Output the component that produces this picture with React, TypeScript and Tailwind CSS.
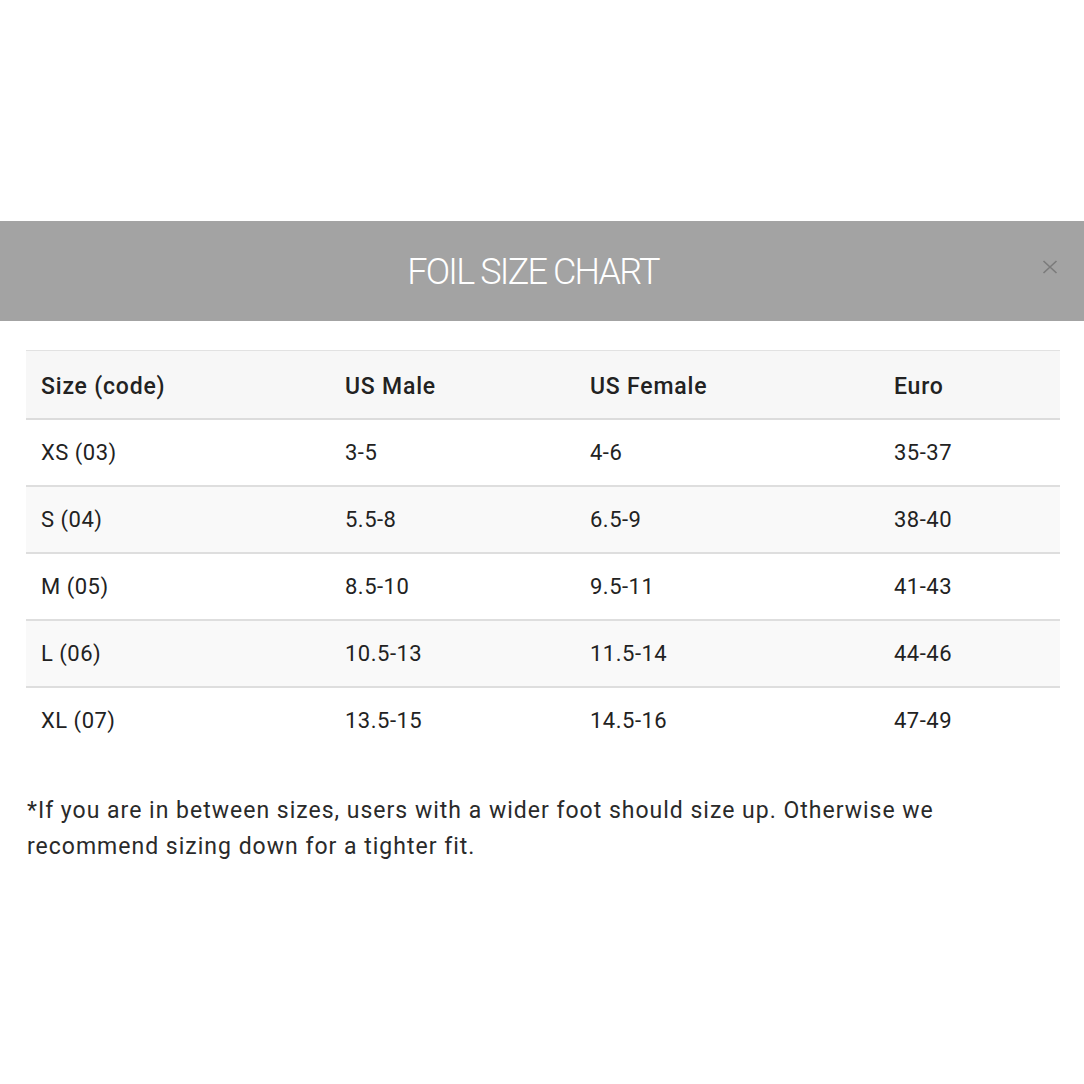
const rows = [
  ["XS (03)", "3-5", "4-6", "35-37"],
  ["S (04)", "5.5-8", "6.5-9", "38-40"],
  ["M (05)", "8.5-10", "9.5-11", "41-43"],
  ["L (06)", "10.5-13", "11.5-14", "44-46"],
  ["XL (07)", "13.5-15", "14.5-16", "47-49"],
];

const cols = ["w-[304px]", "w-[245px]", "w-[304px]", "w-[181px]"];

const App = () => {
  return (
    <main
      className="w-[1084px] h-[1084px] bg-white pt-[221px]"
      style={{ fontFamily: "Roboto, 'Liberation Sans', sans-serif" }}
    >
      <header className="relative h-[100px] bg-[#a3a3a3] flex items-center justify-center pr-[18px]">
        <h1 className="text-[36px] text-white tracking-[-1.8px] font-light mt-[2px]">
          FOIL SIZE CHART
        </h1>
        <button className="absolute right-[26px] top-[39px] text-[#7b7b7b]">
          <svg width="16" height="14" viewBox="0 0 16 14">
            <path d="M1.5 1 L14.5 13 M14.5 1 L1.5 13" stroke="#7b7b7b" strokeWidth="1.6" />
          </svg>
        </button>
      </header>

      <div className="mx-[26px] mt-[29px]">
        <table className="w-[1034px] border-collapse text-[22px] text-[#222] tracking-[0.5px]">
          <thead>
            <tr className="bg-[#f7f7f7] border-t border-[#e2e2e2] border-b-2 border-b-[#dcdcdc] h-[68px]">
              {["Size (code)", "US Male", "US Female", "Euro"].map((h, i) => (
                <th
                  key={h}
                  className={`${cols[i]} text-left font-medium text-[23px] tracking-[0.8px] pl-[15px] pt-[5px]`}
                >
                  {h}
                </th>
              ))}
            </tr>
          </thead>
          <tbody>
            {rows.map((r, ri) => (
              <tr
                key={r[0]}
                className={`h-[67px] ${ri % 2 === 1 ? "bg-[#f9f9f9]" : "bg-white"} ${
                  ri < rows.length - 1 ? "border-b-2 border-[#dedede]" : ""
                }`}
              >
                {r.map((c, ci) => (
                  <td key={ci} className={`${cols[ci]} pl-[15px] font-normal`}>
                    {c}
                  </td>
                ))}
              </tr>
            ))}
          </tbody>
        </table>

        <p className="mt-[39px] ml-[1px] text-[23px] tracking-[1px] leading-[36px] text-[#2a2a2a] w-[960px]">
          *If you are in between sizes, users with a wider foot should size up. Otherwise we
          <br />
          recommend sizing down for a tighter fit.
        </p>
      </div>
    </main>
  );
};

export default App;
